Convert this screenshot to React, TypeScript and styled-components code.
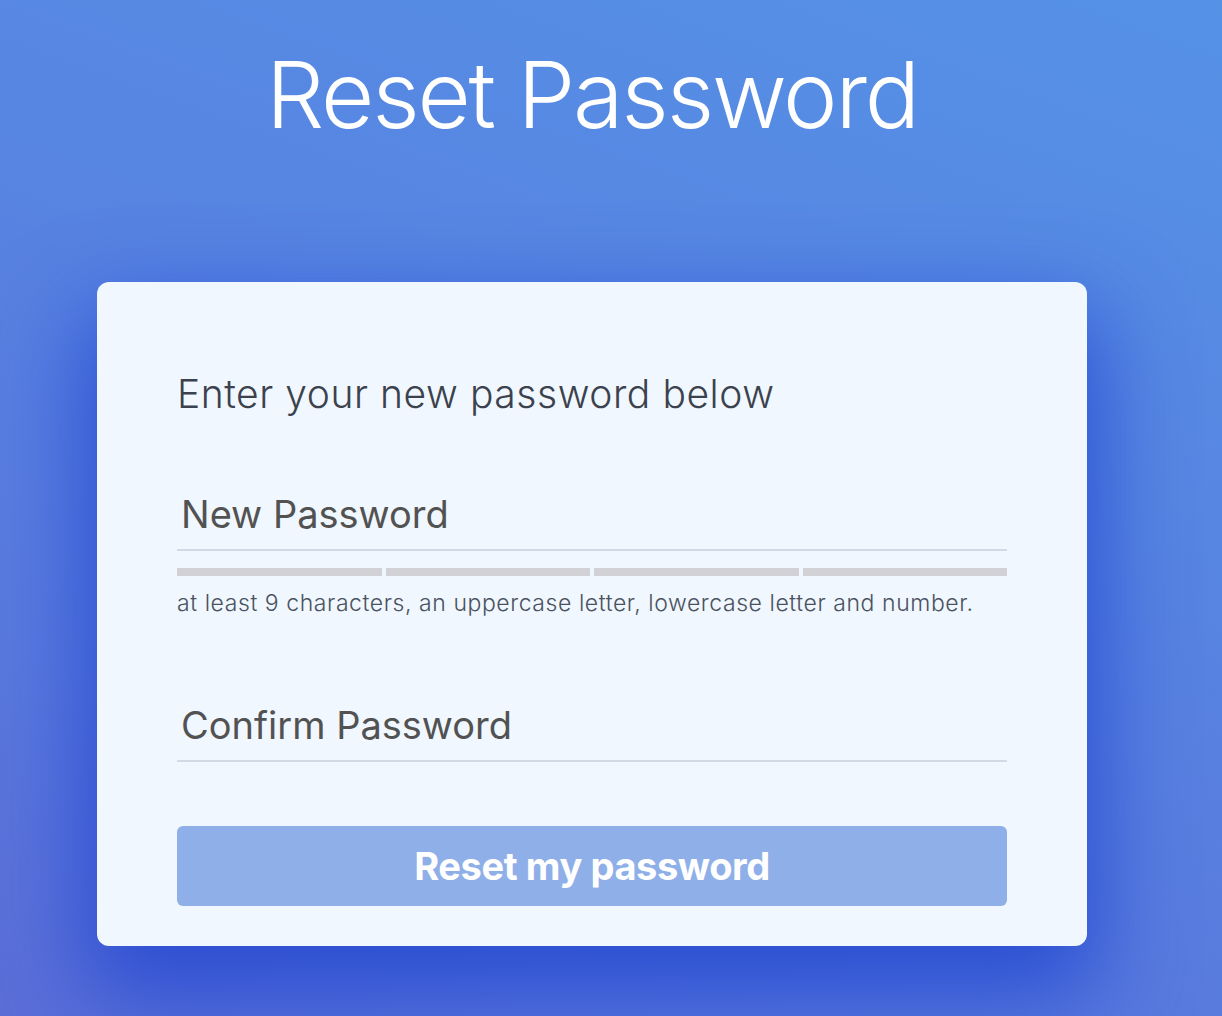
import React from 'react';
import styled, { createGlobalStyle } from 'styled-components';

const GlobalStyle = createGlobalStyle`
  html, body {
    margin: 0;
    padding: 0;
  }
  body {
    font-family: Inter, "Noto Sans", sans-serif;
    background: #5a84e2;
  }
`;

const Page = styled.main`
  width: 1222px;
  height: 1016px;
  box-sizing: border-box;
  padding-right: 38px;
  overflow: hidden;
  display: flex;
  flex-direction: column;
  align-items: center;
  background:
    radial-gradient(ellipse 60% 50% at 0% 100%, rgba(92, 108, 214, 0.6), transparent 70%),
    linear-gradient(200deg, #5592e6 0%, #587fe0 55%, #5a72da 100%);
`;

const Title = styled.h1`
  margin: 39px 0 0;
  font-size: 92px;
  font-weight: 300;
  line-height: 1.21;
  color: #ffffff;
  letter-spacing: -2.2px;
`;

const Card = styled.form`
  margin-top: 132px;
  width: 990px;
  box-sizing: border-box;
  padding: 88px 80px 40px 80px;
  background: #f0f7fe;
  border-radius: 12px;
  box-shadow: 0 40px 90px 10px rgba(34, 70, 208, 0.85);
  display: flex;
  flex-direction: column;
`;

const Lead = styled.p`
  margin: 0;
  font-size: 39px;
  font-weight: 300;
  line-height: 1.21;
  color: #3b424d;
  letter-spacing: 0.55px;
`;

const Field = styled.div<{ $top: number }>`
  margin-top: ${(p) => p.$top}px;
  display: flex;
  flex-direction: column;
`;

const Input = styled.input`
  border: none;
  border-bottom: 2px solid #d0d9e4;
  background: transparent;
  outline: none;
  padding: 10px 4px 12px;
  font-family: Inter, "Noto Sans", sans-serif;
  font-size: 38px;
  color: #525252;
  &::placeholder {
    color: #525252;
    opacity: 1;
  }
`;

const Strength = styled.div`
  margin-top: 17px;
  display: grid;
  grid-template-columns: repeat(4, 1fr);
  gap: 4px;
`;

const Bar = styled.span`
  height: 8px;
  background: #d1d1d6;
`;

const Hint = styled.p`
  margin: 14px 0 0;
  font-size: 23px;
  font-weight: 300;
  line-height: 1.21;
  color: #4a525e;
  letter-spacing: 0.57px;
`;

const Submit = styled.button`
  margin-top: 64px;
  height: 80px;
  border: none;
  border-radius: 6px;
  background: #8fafe8;
  color: #ffffff;
  font-family: Inter, "Noto Sans", sans-serif;
  font-size: 38px;
  font-weight: 700;
  letter-spacing: -0.4px;
  cursor: pointer;
`;

export default function App() {
  return (
    <Page>
      <GlobalStyle />
      <Title>Reset Password</Title>
      <Card onSubmit={(e) => e.preventDefault()}>
        <Lead>Enter your new password below</Lead>
        <Field $top={63}>
          <Input type="password" placeholder="New Password" />
          <Strength>
            {[0, 1, 2, 3].map((i) => (
              <Bar key={i} />
            ))}
          </Strength>
          <Hint>at least 9 characters, an uppercase letter, lowercase letter and number.</Hint>
        </Field>
        <Field $top={75}>
          <Input type="password" placeholder="Confirm Password" />
        </Field>
        <Submit type="submit">Reset my password</Submit>
      </Card>
    </Page>
  );
}
